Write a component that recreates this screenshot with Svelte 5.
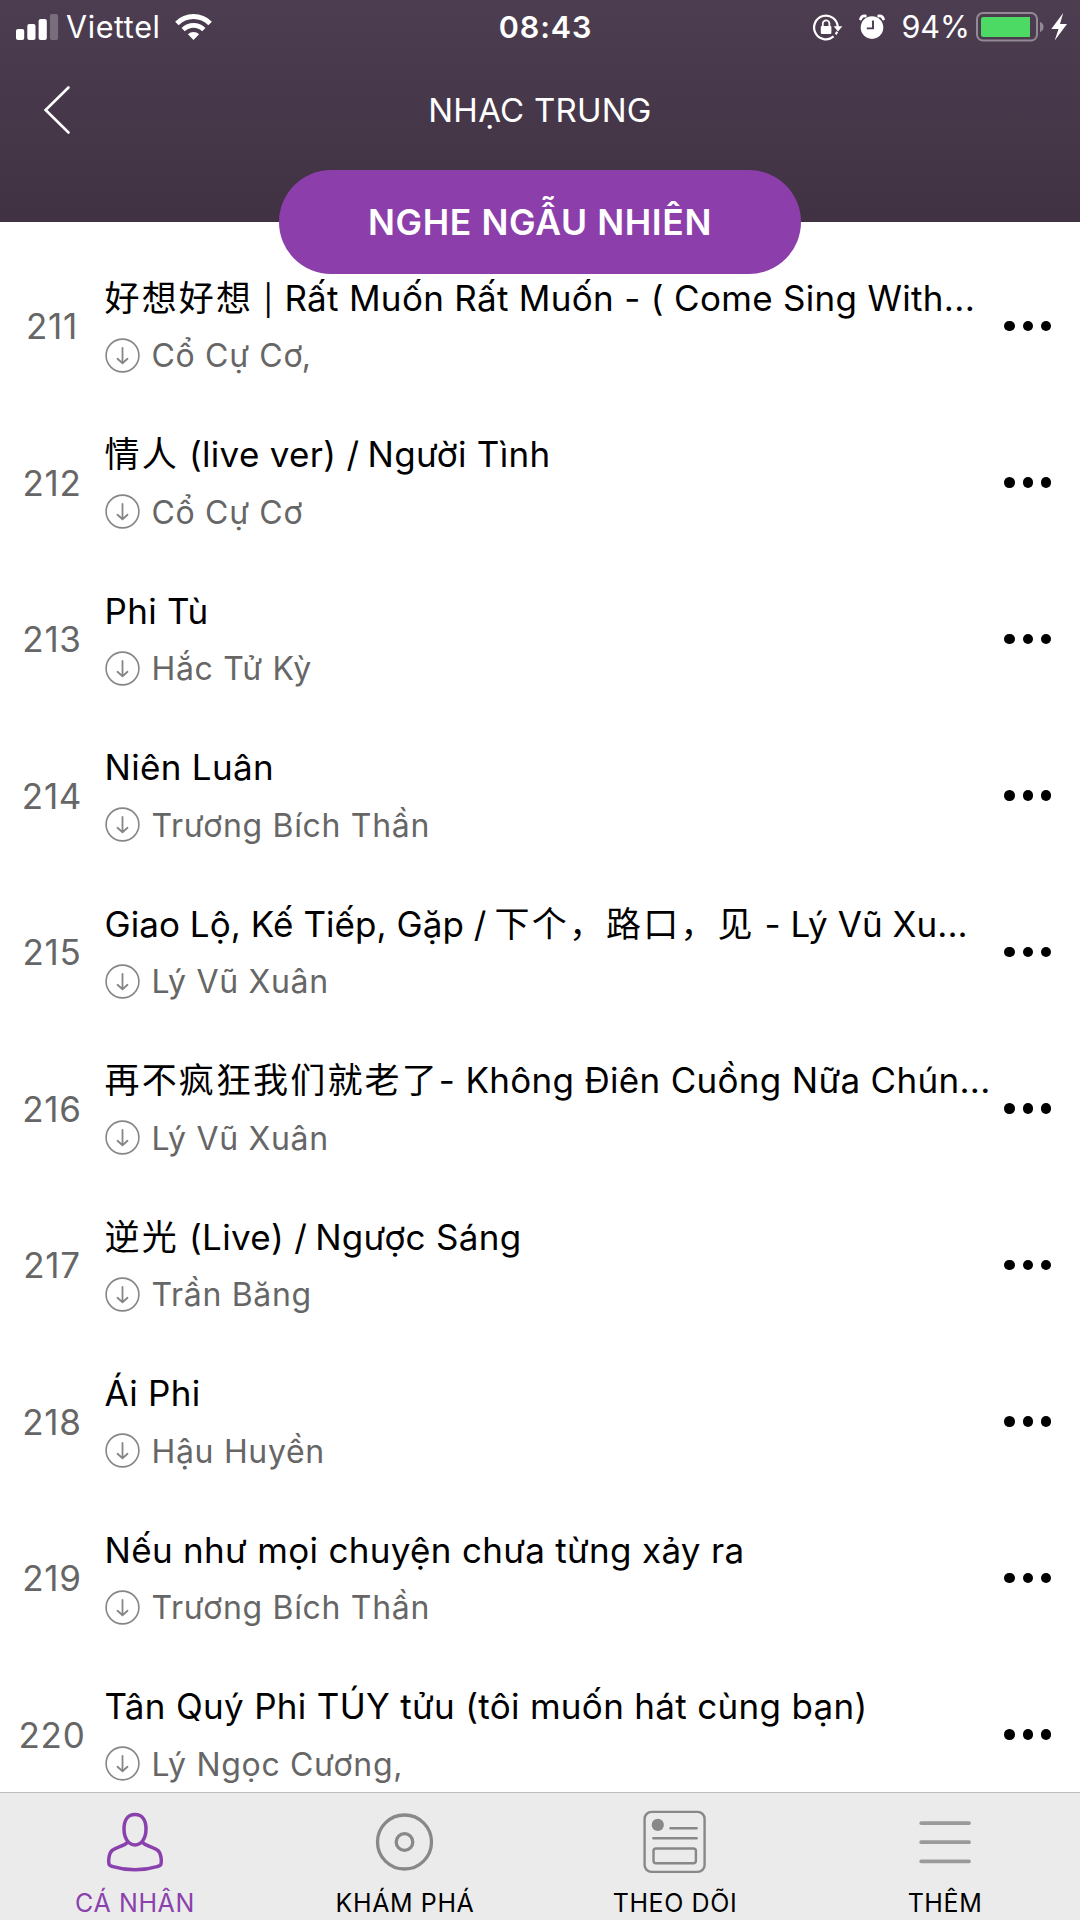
<script>
  const songs = [
    { no: 211, title: '好想好想 | Rất Muốn Rất Muốn - ( Come Sing With...', artist: 'Cổ Cự Cơ,' },
    { no: 212, title: '情人 (live ver) / Người Tình', artist: 'Cổ Cự Cơ' },
    { no: 213, title: 'Phi Tù', artist: 'Hắc Tử Kỳ' },
    { no: 214, title: 'Niên Luân', artist: 'Trương Bích Thần' },
    { no: 215, title: 'Giao Lộ, Kế Tiếp, Gặp / 下个，路口，见 - Lý Vũ Xu...', artist: 'Lý Vũ Xuân', tight: true },
    { no: 216, title: '再不疯狂我们就老了- Không Điên Cuồng Nữa Chún...', artist: 'Lý Vũ Xuân' },
    { no: 217, title: '逆光 (Live) / Ngược Sáng', artist: 'Trần Băng' },
    { no: 218, title: 'Ái Phi', artist: 'Hậu Huyền' },
    { no: 219, title: 'Nếu như mọi chuyện chưa từng xảy ra', artist: 'Trương Bích Thần' },
    { no: 220, title: 'Tân Quý Phi TÚY tửu (tôi muốn hát cùng bạn)', artist: 'Lý Ngọc Cương,' },
  ];

  // Split a title into Han, separator and Latin runs, each with its own tracking.
  const han = /[\u3000-\u9fff\uff00-\uffef]/;
  const runs = (text) =>
    text.split(/([\u3000-\u9fff\uff00-\uffef]+|[/|])/).filter((part) => part !== '');

  const tabs = [
    { id: 'me', label: 'CÁ NHÂN' },
    { id: 'explore', label: 'KHÁM PHÁ' },
    { id: 'follow', label: 'THEO DÕI' },
    { id: 'more', label: 'THÊM' },
  ];
  let active = $state('me');
</script>

<div class="screen">
  <header>
    <div class="status">
      <div class="side">
        <svg width="43" height="26" viewBox="0 0 43 26" fill="#fff">
          <rect x="0" y="15" width="8.2" height="11" rx="2" />
          <rect x="11.3" y="10" width="8.2" height="16" rx="2" />
          <rect x="22.6" y="5" width="8.2" height="21" rx="2" />
          <rect x="33.9" y="0" width="8.2" height="26" rx="2" opacity=".26" />
        </svg>
        <span class="carrier">Viettel</span>
        <svg width="37" height="27" viewBox="0 0 37 27" fill="none" stroke="#fff">
          <path d="M1.900 9.400A23.500 23.500 0 0 1 35.100 9.400" stroke-width="5" />
          <path d="M8.200 15.700A14.500 14.500 0 0 1 28.800 15.700" stroke-width="4.600" />
          <path d="M12.900 20.300A8 8 0 0 1 24.100 20.300L18.500 26Z" fill="#fff" stroke="none" />
        </svg>
      </div>
      <span class="time">08:43</span>
      <div class="side end">
        <svg width="30" height="27" viewBox="0 0 30 27">
          <path d="M20.6 22.4A11.8 11.8 0 1 1 24.7 13" fill="none" stroke="#fff" stroke-width="2.2" />
          <path d="M24.200 17.800l-1.500 2.600" stroke="#fff" stroke-width="2.2" />
          <path d="M20.6 12.2h8.8l-4.4 5.2z" fill="#fff" />
          <rect x="7.8" y="12" width="10.6" height="8" rx="1" fill="#fff" />
          <path d="M9.8 12.5V9.6a3.3 3.3 0 0 1 6.6 0v2.9" fill="none" stroke="#fff" stroke-width="1.8" />
        </svg>
        <svg class="alarm" width="26" height="26" viewBox="0 0 26 26">
          <circle cx="13" cy="13.6" r="11.3" fill="#fff" />
          <path d="M1.6 5Q2.8 1.4 6.3 2M24.4 5Q23.2 1.4 19.7 2" fill="none" stroke="#fff" stroke-width="2.8" stroke-linecap="round" />
          <path d="M14 6.4v8H7.8" fill="none" stroke="#483a4c" stroke-width="1.9" />
        </svg>
        <span class="percent">94%</span>
        <svg class="battery" width="68" height="30" viewBox="0 0 68 30">
          <rect x="1" y="1" width="60" height="27.6" rx="6" fill="none" stroke="#938a95" stroke-width="2" />
          <path d="M7.5 5H54v20H7.5a2.5 2.5 0 0 1-2.500-2.500v-15A2.500 2.500 0 0 1 7.500 5z" fill="#4cd964" />
          <path d="M64 10q3.500 1.200 3.500 5t-3.500 5z" fill="#938a95" />
        </svg>
        <svg class="bolt" width="17" height="28" viewBox="0 0 17 28" fill="#fff">
          <path d="M12.200 0L.3 16h7.200L3.700 27.500 16 11H9z" />
        </svg>
      </div>
    </div>
    <nav>
      <button class="back" aria-label="Back">
        <svg width="28" height="50" viewBox="0 0 28 50" fill="none" stroke="#fff" stroke-width="2.600" stroke-linecap="round">
          <path d="M25.500 2.500L2.600 25l22.900 22.500" />
        </svg>
      </button>
      <h1>NHẠC TRUNG</h1>
    </nav>
    <button class="shuffle">NGHE NGẪU NHIÊN</button>
  </header>

  <main>
    {#each songs as song (song.no)}
      <article>
        <span class="no">{song.no}</span>
        <div class="info">
          <div class="title" class:tight={song.tight}>{#each runs(song.title) as run}<span class:han={han.test(run)} class:slash={run === '/'} class:pipe={run === '|'}>{run}</span>{/each}</div>
          <div class="artist">
            <svg width="35" height="35" viewBox="0 0 35 35" fill="none" stroke="#868686" stroke-linecap="round">
              <circle cx="17.500" cy="17.500" r="16.400" stroke-width="1.600" />
              <path d="M17.500 10v15M12.500 20.800l5 4.400 5-4.400" stroke-width="1.800" stroke-linejoin="round" />
            </svg>
            <span>{song.artist}</span>
          </div>
        </div>
        <button class="dots" aria-label="More"><i></i><i></i><i></i></button>
      </article>
    {/each}
  </main>

  <footer>
    {#each tabs as tab (tab.id)}
      <button class="tab" class:active={active === tab.id} onclick={() => (active = tab.id)}>
        <svg width="66" height="66" viewBox="0 0 66 66" fill="none" stroke="currentColor" stroke-linecap="round" stroke-linejoin="round">
          {#if tab.id === 'me'}
            <path d="M33 5.600c-7.800 0-11 6.500-11 14.500 0 9 4.500 15.800 11 15.800s11-6.800 11-15.800c0-8-3.200-14.500-11-14.500z" stroke-width="3.500" />
            <path d="M26 33c-4 4.300-11.500 5-15.800 8.400-3.500 2.800-4 11-3.200 13.600.5 1.800 2.300 2.100 4 2.600 14.500 4.300 29.500 4.300 44 0 1.700-.5 3.500-.8 4-2.600.8-2.600.3-10.800-3.200-13.600C51.500 38 44 37.300 40 33" stroke-width="3.500" />
          {:else if tab.id === 'explore'}
            <circle cx="32.500" cy="33" r="27" stroke-width="3.300" />
            <circle cx="32.500" cy="33" r="8.300" stroke-width="3.300" />
          {:else if tab.id === 'follow'}
            <rect x="2.600" y="2.900" width="60" height="60" rx="7" stroke-width="2.400" />
            <circle cx="15.800" cy="15.900" r="6.100" fill="currentColor" stroke="none" />
            <path d="M28.500 19.200H54.600M11.400 29.200H54.600" stroke-width="2.600" />
            <rect x="11.500" y="39.500" width="42.400" height="14.700" rx="2.500" stroke-width="2.400" />
          {:else}
            <path d="M9.200 14.100H57M9.200 33.200H57M9.200 52.300H57" stroke="#9a9a9a" stroke-width="3.800" />
          {/if}
        </svg>
        <span class="label">{tab.label}</span>
      </button>
    {/each}
  </footer>
</div>

<style>
  :global(body) {
    background: #fff;
  }
  .screen {
    display: flex;
    flex-direction: column;
    width: 1080px;
    height: 1920px;
    overflow: hidden;
    background: #fff;
    font-family: Inter, 'Noto Sans CJK SC', sans-serif;
  }
  button {
    border: 0;
    padding: 0;
    background: none;
    font: inherit;
    color: inherit;
  }
  svg {
    display: block;
    flex: none;
  }
  header {
    flex: none;
    height: 221.700px;
    color: #fff;
    background: linear-gradient(#4c3e50, #403243);
    display: flex;
    flex-direction: column;
    align-items: center;
  }
  .status {
    flex: none;
    width: 100%;
    height: 52px;
    box-sizing: border-box;
    padding: 0 12.500px 0 15.500px;
    display: grid;
    grid-template-columns: 1fr auto 1fr;
    align-items: center;
    font-size: 30.500px;
    line-height: 54px;
  }
  .side {
    display: flex;
    align-items: center;
  }
  .end {
    justify-content: flex-end;
  }
  .carrier {
    margin-left: 7.500px;
    margin-right: 14px;
    letter-spacing: 0.600px;
  }
  .time {
    padding-left: 8px;
    font-weight: 600;
    letter-spacing: 0.900px;
  }
  .alarm {
    margin-left: 16px;
  }
  .percent {
    margin-left: 16px;
  }
  .battery {
    margin-left: 5.500px;
  }
  .bolt {
    margin-left: 7px;
  }
  nav {
    flex: none;
    width: 100%;
    height: 117.700px;
    display: grid;
    grid-template-columns: 1fr auto 1fr;
  }
  .back {
    width: 28px;
    margin: 32.500px 0 0 43px;
    height: 50px;
  }
  h1 {
    margin: 37.800px 0 0;
    font-size: 33px;
    font-weight: 400;
    line-height: 40px;
    letter-spacing: 0.250px;
  }
  .shuffle {
    flex: none;
    box-sizing: border-box;
    width: 521.700px;
    height: 104.400px;
    padding-top: 2px;
    border-radius: 52.200px;
    background: #8c3eaa;
    font-size: 35.500px;
    font-weight: 600;
    line-height: 102.400px;
    letter-spacing: 0.600px;
    position: relative;
    z-index: 1;
  }
  main {
    flex: 1;
    min-height: 0;
    overflow: hidden;
    padding-top: 26.100px;
  }
  article {
    height: 156.520px;
    box-sizing: border-box;
    padding-right: 28.700px;
    display: flex;
    align-items: center;
  }
  .no {
    width: 104px;
    text-align: center;
    font-size: 35px;
    letter-spacing: 0.700px;
    color: #666;
  }
  .info {
    flex: 1;
    min-width: 0;
    align-self: flex-start;
    padding-top: 26.800px;
  }
  .title {
    height: 46px;
    margin-left: 0.500px;
    line-height: 46px;
    font-size: 35px;
    letter-spacing: 0.310px;
    white-space: nowrap;
    color: #000;
  }
  .tight {
    letter-spacing: 0.060px;
  }
  .han {
    letter-spacing: 2.150px;
  }
  .slash {
    letter-spacing: -1.800px;
  }
  .pipe {
    font-size: 30px;
    letter-spacing: 1px;
  }
  .artist {
    margin-top: 11.500px;
    margin-left: 1px;
    height: 46px;
    line-height: 46px;
    display: flex;
    align-items: center;
    gap: 11.500px;
    font-size: 32px;
    letter-spacing: 0.680px;
    white-space: nowrap;
    color: #666;
  }
  .artist span {
    padding-top: 2px;
  }
  .dots {
    display: flex;
    gap: 7.600px;
  }
  .dots i {
    width: 10.600px;
    height: 10.600px;
    border-radius: 50%;
    background: #000;
  }
  footer {
    flex: none;
    height: 128.500px;
    box-sizing: border-box;
    border-top: 1.500px solid #bdbdbd;
    background: #ebebeb;
    display: grid;
    grid-template-columns: repeat(4, 1fr);
  }
  .tab {
    display: flex;
    flex-direction: column;
    align-items: center;
    padding-top: 16px;
    color: #888;
  }
  .label {
    margin-top: 12px;
    font-size: 25px;
    line-height: 32px;
    letter-spacing: 0.600px;
    color: #000;
  }
  .active,
  .active .label {
    color: #8a41ad;
  }
</style>
